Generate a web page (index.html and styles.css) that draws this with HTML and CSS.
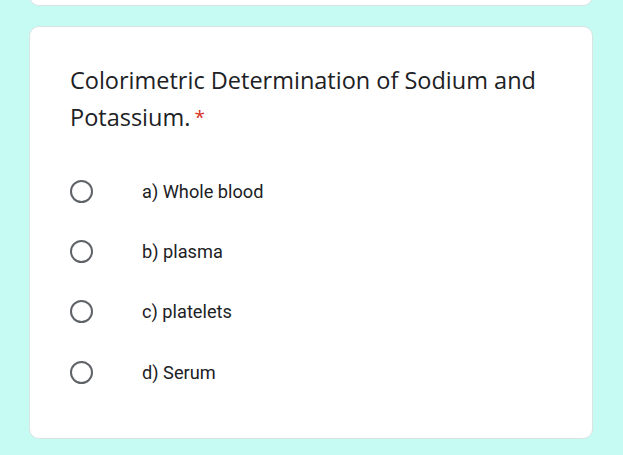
FILE: index.html
```html
<!DOCTYPE html>
<html>
<head>
<meta charset="utf-8">
<link rel="stylesheet" href="styles.css">
</head>
<body>
<div class="page">
  <div class="card card-prev"></div>
  <div class="card card-question">
    <div class="title">Colorimetric Determination of Sodium and Potassium.<span class="req">*</span></div>
    <div class="options">
      <div class="option"><span class="radio"></span><span class="label">a) Whole blood</span></div>
      <div class="option"><span class="radio"></span><span class="label">b) plasma</span></div>
      <div class="option"><span class="radio"></span><span class="label">c) platelets</span></div>
      <div class="option"><span class="radio"></span><span class="label">d) Serum</span></div>
    </div>
  </div>
</div>
</body>
</html>
```
FILE: styles.css
```css
html, body {
  margin: 0;
  padding: 0;
}
body {
  background: #c5fbf3;
  width: 623px;
  height: 455px;
  overflow: hidden;
}
.page {
  display: flex;
  flex-direction: column;
  gap: 20px;
  padding: 0 30px 0 29px;
}
.card {
  background: #ffffff;
  border-radius: 10px;
  border: 1px solid #d9e4e2;
}
.card-prev {
  height: 40px;
  margin-top: -36px;
}
.card-question {
  height: 413px;
  padding: 0 0 0 40px;
  box-sizing: border-box;
}
.title {
  font-family: "Open Sans", sans-serif;
  font-size: 23.5px;
  line-height: 37px;
  color: #202124;
  margin-top: 35px;
  width: 500px;
}
.req {
  color: #d93025;
  font-size: 19px;
  margin-left: 4px;
  vertical-align: 2px;
}
.options {
  margin-top: 25px;
  display: flex;
  flex-direction: column;
}
.option {
  display: flex;
  align-items: center;
  height: 60.3px;
}
.radio {
  width: 19px;
  height: 19px;
  border: 2.7px solid #5f6368;
  border-radius: 50%;
  flex: none;
}
.label {
  font-family: Roboto, sans-serif;
  font-size: 18.2px;
  color: #202124;
  margin-left: 49px;
}
```
